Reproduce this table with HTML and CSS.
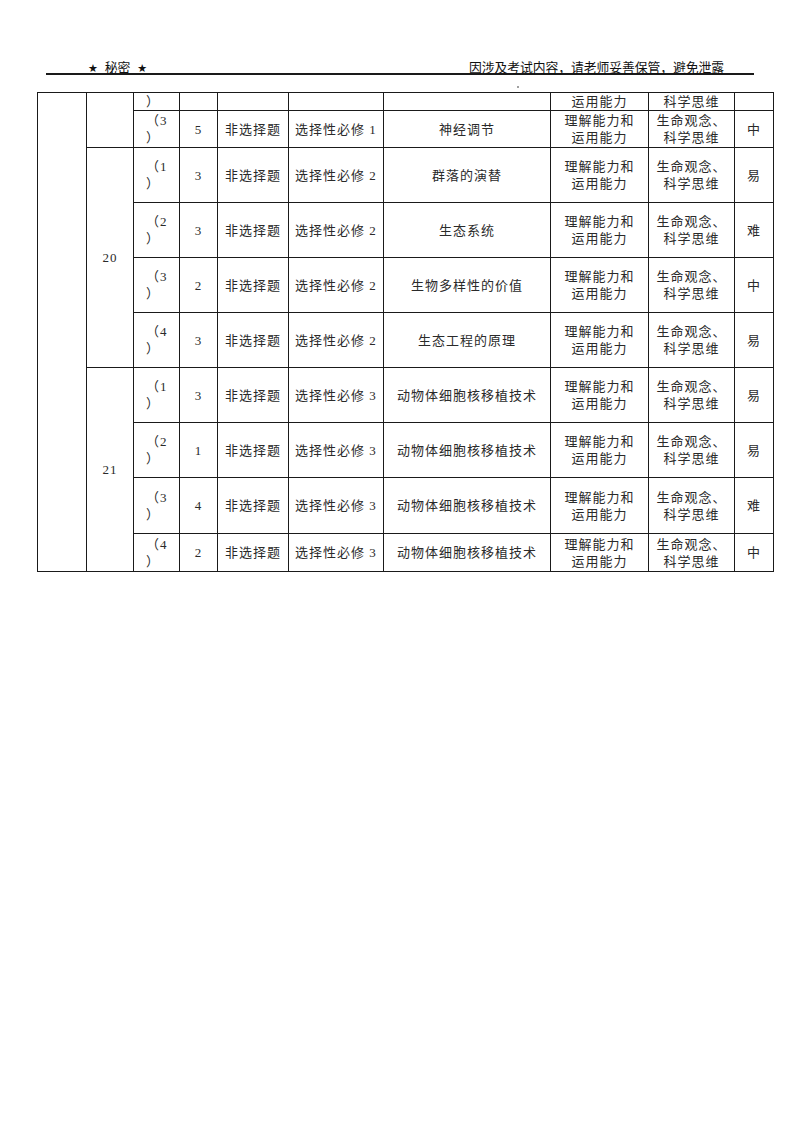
FILE: index.html
```html
<!DOCTYPE html>
<html lang="zh">
<head>
<meta charset="utf-8">
<link rel="stylesheet" href="styles.css">
</head>
<body>
<div class="page">
  <div class="header">
    <span class="secret"><span class="star">★</span> 秘密 <span class="star">★</span></span>
    <span class="notice">因涉及考试内容，请老师妥善保管，避免泄露</span>
  </div>
  <div class="spacer"><span class="dot"></span></div>
  <table class="grid">
    <colgroup>
      <col class="c1"><col class="c2"><col class="c3"><col class="c4"><col class="c5">
      <col class="c6"><col class="c7"><col class="c8"><col class="c9"><col class="c10">
    </colgroup>
    <tr class="r-top">
      <td rowspan="10"></td>
      <td rowspan="2"></td>
      <td class="sub">）</td>
      <td></td><td></td><td></td><td></td>
      <td>运用能力</td>
      <td>科学思维</td>
      <td></td>
    </tr>
    <tr class="r-mid">
      <td class="sub">（3<br>）</td>
      <td>5</td><td>非选择题</td><td>选择性必修 1</td><td>神经调节</td>
      <td>理解能力和<br>运用能力</td><td>生命观念、<br>科学思维</td><td>中</td>
    </tr>
    <tr class="r-std">
      <td rowspan="4">20</td>
      <td class="sub">（1<br>）</td>
      <td>3</td><td>非选择题</td><td>选择性必修 2</td><td>群落的演替</td>
      <td>理解能力和<br>运用能力</td><td>生命观念、<br>科学思维</td><td>易</td>
    </tr>
    <tr class="r-std">
      <td class="sub">（2<br>）</td>
      <td>3</td><td>非选择题</td><td>选择性必修 2</td><td>生态系统</td>
      <td>理解能力和<br>运用能力</td><td>生命观念、<br>科学思维</td><td>难</td>
    </tr>
    <tr class="r-std">
      <td class="sub">（3<br>）</td>
      <td>2</td><td>非选择题</td><td>选择性必修 2</td><td>生物多样性的价值</td>
      <td>理解能力和<br>运用能力</td><td>生命观念、<br>科学思维</td><td>中</td>
    </tr>
    <tr class="r-std">
      <td class="sub">（4<br>）</td>
      <td>3</td><td>非选择题</td><td>选择性必修 2</td><td>生态工程的原理</td>
      <td>理解能力和<br>运用能力</td><td>生命观念、<br>科学思维</td><td>易</td>
    </tr>
    <tr class="r-std">
      <td rowspan="4">21</td>
      <td class="sub">（1<br>）</td>
      <td>3</td><td>非选择题</td><td>选择性必修 3</td><td>动物体细胞核移植技术</td>
      <td>理解能力和<br>运用能力</td><td>生命观念、<br>科学思维</td><td>易</td>
    </tr>
    <tr class="r-std">
      <td class="sub">（2<br>）</td>
      <td>1</td><td>非选择题</td><td>选择性必修 3</td><td>动物体细胞核移植技术</td>
      <td>理解能力和<br>运用能力</td><td>生命观念、<br>科学思维</td><td>易</td>
    </tr>
    <tr class="r-std r-std-last">
      <td class="sub">（3<br>）</td>
      <td>4</td><td>非选择题</td><td>选择性必修 3</td><td>动物体细胞核移植技术</td>
      <td>理解能力和<br>运用能力</td><td>生命观念、<br>科学思维</td><td>难</td>
    </tr>
    <tr class="r-last">
      <td class="sub">（4<br>）</td>
      <td>2</td><td>非选择题</td><td>选择性必修 3</td><td>动物体细胞核移植技术</td>
      <td>理解能力和<br>运用能力</td><td>生命观念、<br>科学思维</td><td>中</td>
    </tr>
  </table>
</div>
</body>
</html>
```

FILE: styles.css
```css
html, body {
  margin: 0;
  padding: 0;
  background: #ffffff;
}

.page {
  width: 800px;
  height: 1132px;
  position: relative;
}

.header {
  margin-left: 46px;
  width: 708px;
  height: 75px;
  box-sizing: border-box;
  padding: 60px 30px 0 42px;
  border-bottom: 2px solid #1a1a1a;
  display: flex;
  justify-content: space-between;
  align-items: flex-start;
  font-family: "Noto Sans CJK SC", "DejaVu Sans", sans-serif;
  font-size: 12.8px;
  line-height: 13px;
  color: #111;
}

.secret,
.notice {
  display: block;
  height: 13px;
  line-height: 13px;
}

.secret {
  word-spacing: 4px;
}

.star {
  font-family: "DejaVu Sans", sans-serif;
  font-size: 11px;
  line-height: 13px;
}

.notice {
  letter-spacing: -0.05px;
}

.spacer {
  height: 17px;
  position: relative;
}

.dot {
  position: absolute;
  left: 517px;
  top: 11px;
  width: 2px;
  height: 2px;
  background: #a0a0a0;
}

.grid {
  margin-left: 37px;
  width: 736px;
  table-layout: fixed;
  border-collapse: collapse;
  border: 1.5px solid #1a1a1a;
  font-family: "Liberation Serif", "Noto Sans CJK SC", serif;
  font-size: 13px;
  letter-spacing: 1px;
  line-height: 17px;
  color: #2a2a2a;
  text-spacing-trim: space-all;
}

.grid td {
  border: 1px solid #1a1a1a;
  padding: 0 2px;
  text-align: center;
  vertical-align: middle;
  overflow: hidden;
  white-space: nowrap;
}

.grid td.sub {
  text-align: left;
  padding-left: 12px;
  padding-right: 0;
  letter-spacing: 1px;
}

.c1 { width: 49px; }
.c2 { width: 47px; }
.c3 { width: 46px; }
.c4 { width: 38px; }
.c5 { width: 71px; }
.c6 { width: 95px; }
.c7 { width: 167px; }
.c8 { width: 98px; }
.c9 { width: 86px; }
.c10 { width: 39px; }

.r-top { height: 18px; }
.r-mid { height: 37px; }
.r-std { height: 55px; }
.r-std-last { height: 56px; }
.r-last { height: 38px; }
```
